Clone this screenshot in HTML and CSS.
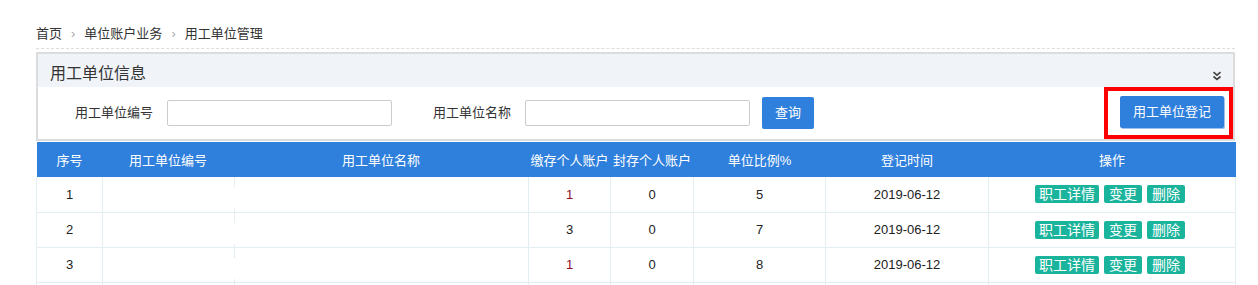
FILE: index.html
```html
<!DOCTYPE html>
<html lang="zh-CN">
<head>
<meta charset="utf-8">
<title>用工单位管理</title>
<link rel="stylesheet" href="styles.css">
</head>
<body>
<div class="page">
  <div class="crumb">
    <span>首页</span><span class="sep">›</span><span>单位账户业务</span><span class="sep">›</span><span>用工单位管理</span>
  </div>
  <div class="panel">
    <div class="panel-head">
      <span class="panel-title">用工单位信息</span>
      <svg class="chev" width="10" height="10" viewBox="0 0 10 10"><path d="M1.5 1.2 L5 4.2 L8.5 1.2 M1.5 5.5 L5 8.5 L8.5 5.5" fill="none" stroke="#444" stroke-width="1.7"/></svg>
    </div>
    <div class="form-row">
      <label class="lbl first">用工单位编号</label>
      <input class="inp" type="text">
      <label class="lbl second">用工单位名称</label>
      <input class="inp" type="text">
      <button class="btn query">查询</button>
      <div class="highlight"><button class="btn">用工单位登记</button></div>
    </div>
  </div>
  <table class="grid">
    <colgroup>
      <col class="c1"><col class="c2"><col class="c3"><col class="c4"><col class="c5"><col class="c6"><col class="c7"><col class="c8">
    </colgroup>
    <thead>
      <tr><th>序号</th><th>用工单位编号</th><th>用工单位名称</th><th>缴存个人账户</th><th>封存个人账户</th><th>单位比例%</th><th>登记时间</th><th>操作</th></tr>
    </thead>
    <tbody>
      <tr><td>1</td><td class="code"></td><td class="name"></td><td class="red">1</td><td>0</td><td>5</td><td>2019-06-12</td><td><div class="ops"><span class="tag">职工详情</span><span class="tag">变更</span><span class="tag">删除</span></div></td></tr>
      <tr><td>2</td><td class="code"></td><td class="name"></td><td>3</td><td>0</td><td>7</td><td>2019-06-12</td><td><div class="ops"><span class="tag">职工详情</span><span class="tag">变更</span><span class="tag">删除</span></div></td></tr>
      <tr><td>3</td><td class="code"></td><td class="name"></td><td class="red">1</td><td>0</td><td>8</td><td>2019-06-12</td><td><div class="ops"><span class="tag">职工详情</span><span class="tag">变更</span><span class="tag">删除</span></div></td></tr>
      <tr><td></td><td class="code"></td><td class="name"></td><td></td><td></td><td></td><td></td><td></td></tr>
    </tbody>
  </table>
</div>
</body>
</html>
```

FILE: styles.css
```css
* { box-sizing: border-box; }
html, body { margin: 0; padding: 0; background: #fff; overflow: hidden; }
body {
  font-family: "Liberation Sans", "Noto Sans CJK SC", sans-serif;
  font-size: 13px;
  color: #333;
}
.page { padding-left: 36px; width: 1235px; }

.crumb {
  padding-top: 22px;
  height: 49px;
  line-height: 24px;
  border-bottom: 1px dashed #ddd;
  color: #333;
}
.crumb .sep { color: #aaa; margin: 0 9px; }

.panel {
  margin-top: 3px;
  border: 2px solid #dcdcdc;
}
.panel-head {
  height: 33px;
  padding: 6px 11px 0 12px;
  background: #f0f4f8;
  display: flex;
  align-items: center;
  justify-content: space-between;
}
.panel-title { font-size: 16px; color: #333; line-height: 20px; }
.chev { margin-top: 4px; }

.form-row {
  height: 52px;
  display: flex;
  align-items: center;
  padding-left: 37px;
}
.lbl { color: #333; margin-right: 14px; line-height: 20px; }
.lbl.second { margin-left: 41px; }
.inp {
  width: 225px;
  height: 26px;
  border: 1px solid #ccc;
  border-radius: 2px;
  margin: -1px 0 0 0;
  padding: 0 6px;
}
.btn {
  height: 32px;
  padding: 0 13px;
  border: none;
  border-radius: 2px;
  background: #2f7fdc;
  color: #fff;
  font-family: "Liberation Sans", "Noto Sans CJK SC", sans-serif;
  font-size: 13px;
  line-height: 32px;
  margin-top: -1px;
}
.query { margin-left: 12px; }
.highlight {
  margin-left: auto;
  height: 52px;
  border: 4px solid #f00;
  padding: 5px 5px 6px 12px;
  margin-top: -1px;
}
.highlight .btn { margin-top: 0; box-shadow: 1px 1px 0 #9fc3ee; }

.grid {
  margin-top: 1px;
  width: 1199px;
  border-collapse: collapse;
  table-layout: fixed;
  font-size: 13px;
}
.c1 { width: 66px; } .c2 { width: 131px; } .c3 { width: 295px; } .c4 { width: 82px; }
.c5 { width: 83px; } .c6 { width: 132px; } .c7 { width: 163px; } .c8 { width: 247px; }
.grid th {
  height: 35px;
  background: #2f7fdc;
  color: #fff;
  font-weight: normal;
  padding: 0;
  text-align: center;
}
.grid td {
  height: 35px;
  padding: 0;
  text-align: center;
  color: #222;
  border: 1px solid #e3eef2;
  border-top: none;
}
.grid td.code { border-right: none; }
.grid td.name {
  border-left: none;
  background:
    linear-gradient(#e3eef2, #e3eef2) no-repeat left top / 1px 10px,
    linear-gradient(#e3eef2, #e3eef2) no-repeat left bottom / 1px 3px;
}
.grid td.red { color: #8b0a28; }
.ops {
  display: flex;
  justify-content: center;
  gap: 5px;
  padding-right: 4px;
}
.tag {
  display: block;
  height: 18px;
  line-height: 18px;
  padding: 0 4px;
  min-width: 38px;
  border-radius: 2px;
  background: #1ab39c;
  color: #fff;
  font-size: 14px;
  text-align: center;
}
```
